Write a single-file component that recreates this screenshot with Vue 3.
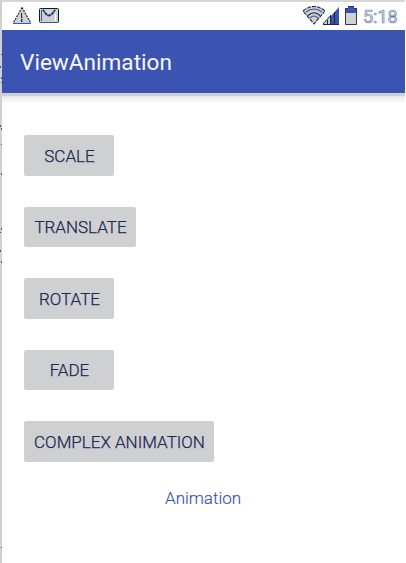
<script setup>
const buttons = [
  { label: 'SCALE', kind: 'scale' },
  { label: 'TRANSLATE', kind: 'translate' },
  { label: 'ROTATE', kind: 'rotate' },
  { label: 'FADE', kind: 'fade' },
  { label: 'COMPLEX ANIMATION', kind: 'complex' },
]
const edgeMarks = [
  [1, 54], [0, 66], [1, 77], [1, 82], [0, 125], [1, 128], [1, 144],
  [1, 173], [1, 228], [0, 232], [0, 250], [1, 261], [1, 547],
]
</script>

<template>
  <div class="screen">
    <svg class="edge" width="2" height="563" shape-rendering="crispEdges">
      <rect width="2" height="563" fill="#d0d0d3" />
      <rect v-for="([x, y], i) in edgeMarks" :key="i" :x="x" :y="y" width="1" :height="i % 3 === 0 ? 1 : 2" fill="#3b53b1" />
    </svg>
    <div class="phone">
      <header class="status">
        <svg class="notifications" width="64" height="28">
          <path d="M20 8L29 23H11Z" fill="#cfd0d2" />
          <path d="M20 7.5L28.5 22.5M20 7.5L11.5 22.5" fill="none" stroke="#202736" stroke-width="1.2" stroke-dasharray="2 1" />
          <path d="M11 23.5H29" stroke="#3b53b1" />
          <path d="M19.5 13V18M19.5 19V22M20.5 17.5H21M20.5 19.5H21M20.5 21.5H21" stroke="#202736" />
          <rect x="37.5" y="8.5" width="19" height="14" rx="1" fill="#cfd0d2" stroke="#111a2b" />
          <path d="M39.5 10V21" stroke="#3b53b1" />
          <path d="M53.5 14V21" stroke="white" />
          <path d="M38 22.5H56" stroke="#3b53b1" />
          <path d="M41 10L44 14L46 15.5H48L50 14L53 10" fill="none" stroke="#3b53b1" stroke-width="1.6" />
          <path d="M41 10L44 14L46 15.5H48L50 14L53 10" fill="none" stroke="#111a2b" stroke-width="1.4" stroke-dasharray="1.5 2.5" />
          <path d="M44 10.5H50L47 13Z" fill="#dfe0e2" />
        </svg>
        <div class="indicators">
          <svg width="56" height="28">
            <path d="M1 11Q12 2 23 11L12 24Z" fill="#cfd0d2" />
            <path d="M1 11Q12 2 23 11M1.5 11.5L12 24L22.5 11.5" fill="none" stroke="#202736" stroke-width="1.1" stroke-dasharray="4 1" />
            <path d="M4 12Q12 6 20 12M8 18Q12 14 16 18" fill="none" stroke="#3b53b1" stroke-width="1.1" />
            <path d="M6 15.5Q12 10 18 15.5" fill="none" stroke="#202736" stroke-width="1.1" />
            <path d="M21 25L37 7V25Z" fill="#3b53b1" />
            <path d="M21 24L29 15V24Z" fill="#cfd0d2" />
            <path d="M21 24.5H37M21 24L29 15M25.5 20V24M28.5 16V24M32.5 12V24" stroke="#202736" fill="none" />
            <rect x="43.5" y="8.5" width="11" height="16" fill="#cfd0d2" />
            <path d="M43 8H46V6H52V8H55V13H43Z" fill="#3b53b1" />
            <path d="M43.5 9V24.5H54.5V9M46 6.5H52M43 8.5H46M52 8.5H55" fill="none" stroke="#303548" />
          </svg>
          <span class="clock">5:18</span>
        </div>
      </header>
      <div class="appbar"><h1>ViewAnimation</h1></div>
      <div class="shadow"></div>
      <main>
        <button v-for="b in buttons" :key="b.label" :class="b.kind"><span>{{ b.label }}</span></button>
        <p>Animation</p>
      </main>
    </div>
  </div>
</template>

<style>
body { margin: 0; background: #fff; }
</style>
<style scoped>
.screen { width: 406px; height: 563px; display: flex; overflow: hidden; font-family: Roboto, "Liberation Sans", sans-serif; }
.edge { display: block; flex: none; }
.phone { width: 403px; }
.status { box-sizing: border-box; height: 30px; border-top: 2px solid #d6d6d7; display: flex; justify-content: space-between; }
.notifications { display: block; margin: -2px 0 0; }
.indicators { display: flex; margin-top: -2px; width: 103px; }
.indicators svg { display: block; flex: none; }
.clock { margin-left: 5px; padding-top: 6px; font-size: 18px; line-height: 21px; color: #e4e5e9; -webkit-text-stroke: .65px #6878b4; white-space: nowrap; }
.appbar { height: 63px; background: #3b53b1; display: flex; align-items: center; padding: 3px 0 0 18px; box-sizing: border-box; }
h1 { margin: 0; font-size: 22.6px; line-height: 28px; font-weight: 400; color: #f7f7f7; }
.shadow { height: 9px; background: linear-gradient(#d0d1d2 0 3px, #e9e9e9 3px 5px, #f3f3f3 5px); }
main { padding: 33px 0 0 22px; }
button { display: flex; align-items: center; justify-content: center; width: 90px; height: 40.5px; margin: 0 0 31px; padding: 1px 0 0 1px; border: 0; border-radius: 2px; background: #cfd0d2; color: #17213f; font: 300 17px/20px Roboto, sans-serif; -webkit-text-stroke: .25px #202e6c; white-space: nowrap; }
.translate { width: 112px; }
.complex { width: 190px; margin-bottom: 25px; }
p { margin: 0 0 0 141px; font-size: 17px; line-height: 22px; font-weight: 300; color: #3b53b1; -webkit-text-stroke: .15px #3b53b1; }
</style>
